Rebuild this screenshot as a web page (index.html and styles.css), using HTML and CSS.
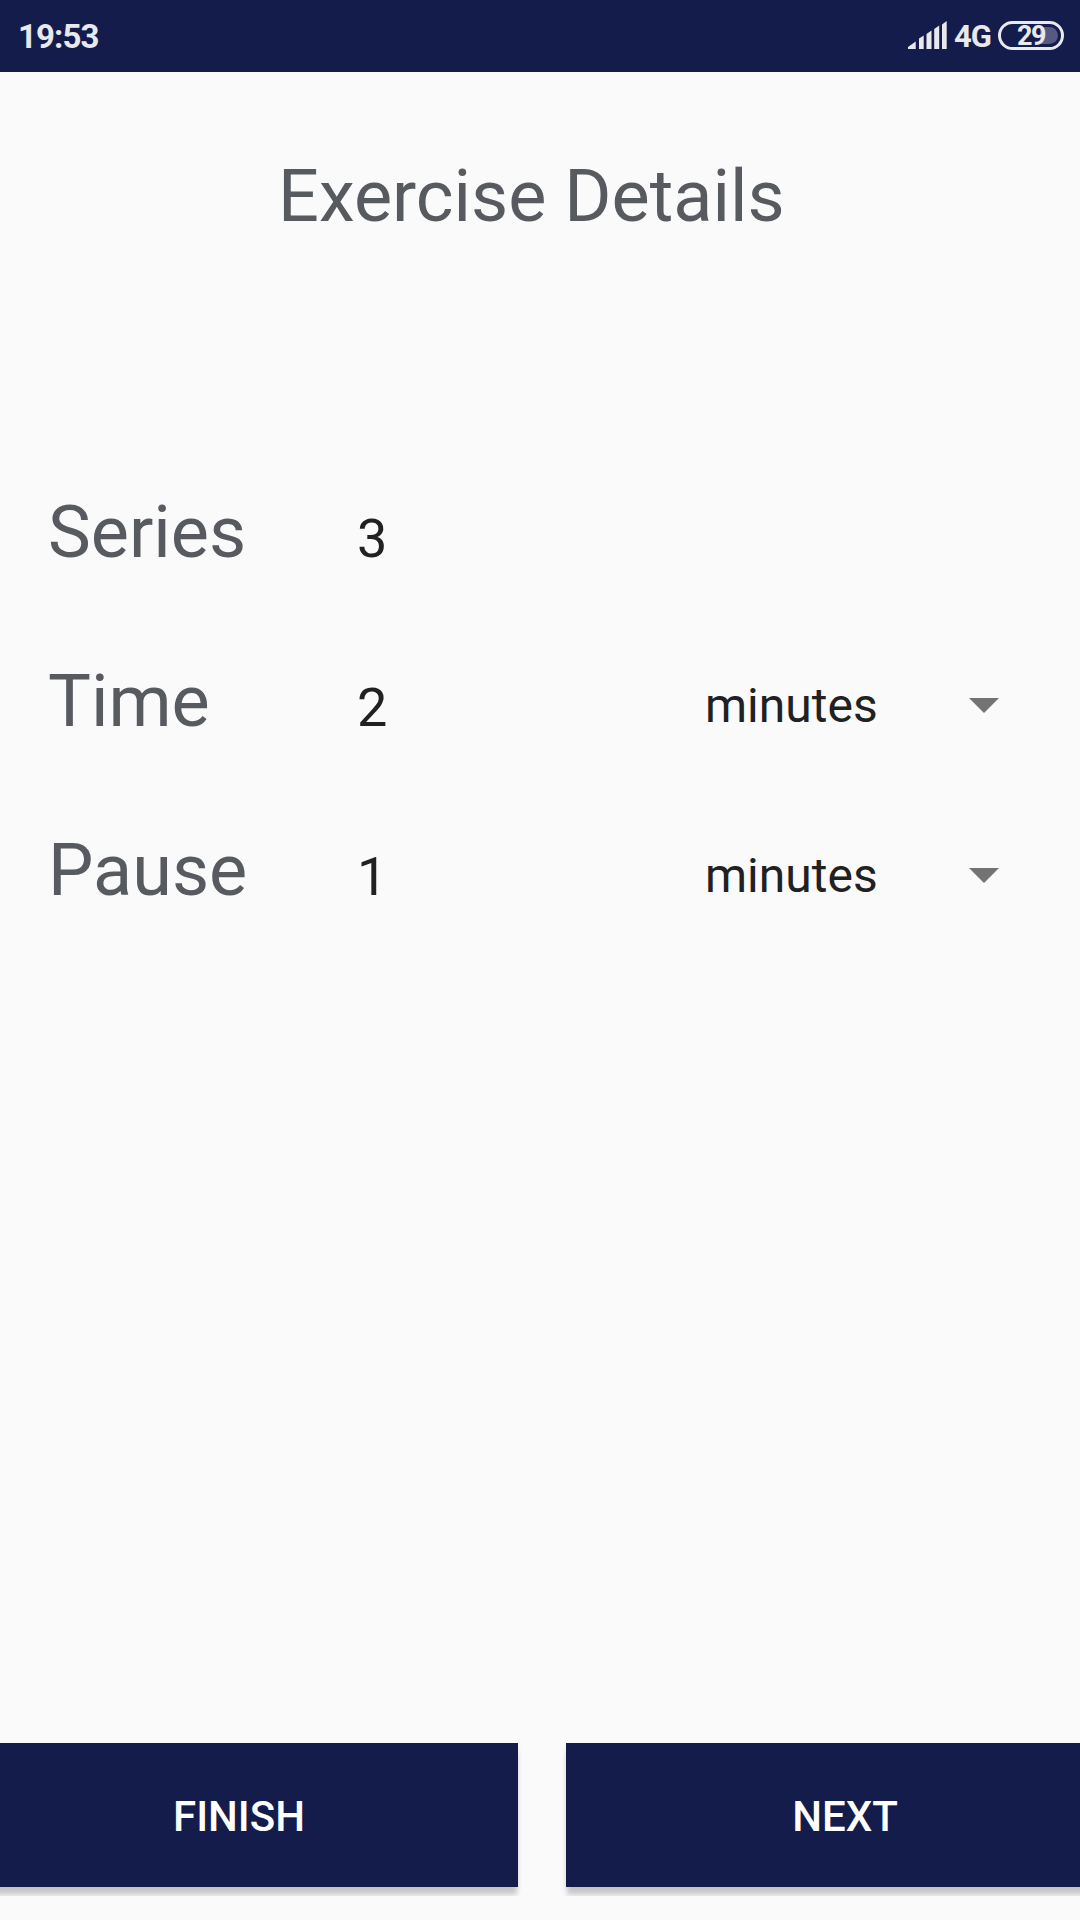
FILE: index.html
```html
<!DOCTYPE html>
<html lang="en">
<head>
<meta charset="utf-8">
<title>Exercise Details</title>
<link rel="stylesheet" href="styles.css">
</head>
<body>
<div class="screen">
  <header class="status-bar">
    <span class="clock">19:53</span>
    <div class="indicators">
      <svg class="signal" width="39" height="28" viewBox="0 0 39 28">
        <path d="M0 28v-2l7.7-5.500v7.500zM11 28V17.500l4.700-3V28zM18.500 28V13l5-3.500V28zM26.200 28V8l5-3.500V28zM34 28V3.500L38.700 0V28z"/>
      </svg>
      <span class="network">4G</span>
      <div class="battery">
        <span class="battery-charge"></span>
        <span class="battery-level">29</span>
      </div>
    </div>
  </header>
  <main class="content">
    <h1 class="title">Exercise Details</h1>
    <div class="fields">
      <div class="field">
        <span class="label">Series</span>
        <span class="value">3</span>
      </div>
      <div class="field">
        <span class="label">Time</span>
        <span class="value">2</span>
        <div class="spinner">
          <span class="unit">minutes</span>
          <svg class="arrow" width="30" height="15" viewBox="0 0 30 15"><path d="M0 0h30L15 15z"/></svg>
        </div>
      </div>
      <div class="field">
        <span class="label">Pause</span>
        <span class="value">1</span>
        <div class="spinner">
          <span class="unit">minutes</span>
          <svg class="arrow" width="30" height="15" viewBox="0 0 30 15"><path d="M0 0h30L15 15z"/></svg>
        </div>
      </div>
    </div>
  </main>
  <footer class="actions">
    <button class="action" type="button">FINISH</button>
    <button class="action" type="button">NEXT</button>
  </footer>
</div>
</body>
</html>
```
FILE: styles.css
```css
* {
  box-sizing: border-box;
}

body {
  margin: 0;
  background: #fafafa;
  font-family: Roboto, sans-serif;
}

.screen {
  display: flex;
  flex-direction: column;
  width: 1080px;
  height: 1920px;
  padding-bottom: 24px;
  overflow: hidden;
}

.status-bar {
  display: flex;
  flex: none;
  justify-content: space-between;
  height: 72px;
  padding: 0 16px 0 18px;
  background: #141c4c;
  color: #e8e8ed;
}

.clock {
  padding-top: 18px;
  font-size: 33px;
  font-weight: 700;
  letter-spacing: -0.9px;
  line-height: 38px;
}

.indicators {
  display: flex;
  align-items: flex-start;
}

.signal {
  margin-top: 21px;
  fill: #e8e8ed;
}

.network {
  width: 51px;
  padding: 19px 0 0 7px;
  font-size: 31px;
  font-weight: 700;
  letter-spacing: -1px;
  line-height: 36px;
}

.battery {
  display: grid;
  width: 66px;
  height: 29px;
  margin-top: 21px;
  padding: 3px;
  border: 3px solid #e8e8ed;
  border-radius: 15px;
}

.battery-charge,
.battery-level {
  grid-area: 1 / 1;
}

.battery-charge {
  justify-self: end;
  width: 18px;
  height: 17px;
  border-radius: 0 9px 9px 0;
  background: #555b80;
}

.battery-level {
  justify-self: center;
  height: 17px;
  font-size: 27px;
  font-weight: 700;
  letter-spacing: -1.5px;
  line-height: 18px;
}

.content {
  flex: 1;
  padding: 83px 0 0;
}

.title {
  margin: 0;
  padding-left: 278px;
  color: #575b60;
  font-size: 72px;
  font-weight: 400;
  line-height: 84px;
}

.fields {
  padding: 252px 0 0 48px;
}

.field {
  display: grid;
  grid-template-columns: 309px 348px 294px;
  align-items: baseline;
  height: 169px;
}

.label {
  color: #575b60;
  font-size: 72px;
  line-height: 84px;
}

.value {
  color: #212121;
  font-size: 54px;
  line-height: 64px;
}

.spinner {
  display: flex;
  align-self: start;
  align-items: center;
  justify-content: space-between;
  height: 56px;
  margin-top: 18px;
}

.field:last-child .spinner {
  margin-top: 19px;
}

.unit {
  color: #212121;
  font-size: 48px;
  line-height: 56px;
}

.arrow {
  margin-bottom: 2px;
  fill: #737373;
}

.actions {
  display: flex;
  flex: none;
  gap: 48px;
  height: 153px;
  margin: 0 -46px 0 -40px;
  overflow: hidden;
}

.action {
  width: 558px;
  height: 144px;
  padding: 3px 0 0;
  border: 0;
  background: #141c4c;
  box-shadow: 0 9px 5px -1px rgba(0, 0, 0, 0.19), 0 2px 6px rgba(0, 0, 0, 0.05);
  color: #fff;
  font: 500 42px/50px Roboto, sans-serif;
}
```
